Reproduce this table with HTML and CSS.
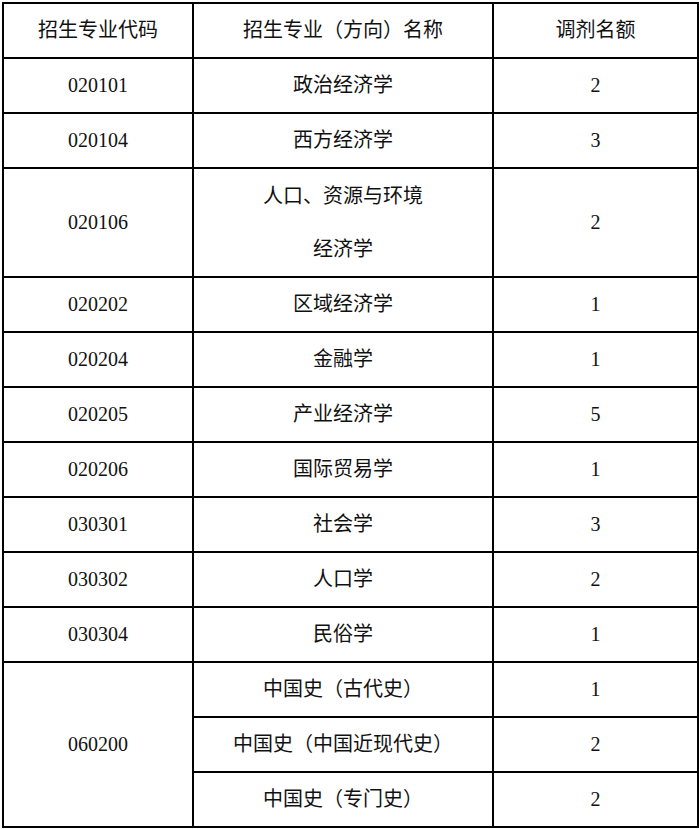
FILE: index.html
```html
<!DOCTYPE html>
<html lang="zh-CN">
<head>
<meta charset="utf-8">
<link rel="stylesheet" href="styles.css">
</head>
<body>
<table class="quota">
  <colgroup>
    <col class="c-code">
    <col class="c-name">
    <col class="c-num">
  </colgroup>
  <thead>
    <tr><th>招生专业代码</th><th>招生专业（方向）名称</th><th>调剂名额</th></tr>
  </thead>
  <tbody>
    <tr><td>020101</td><td>政治经济学</td><td>2</td></tr>
    <tr><td>020104</td><td>西方经济学</td><td>3</td></tr>
    <tr class="tall"><td>020106</td><td>人口、资源与环境<br>经济学</td><td>2</td></tr>
    <tr><td>020202</td><td>区域经济学</td><td>1</td></tr>
    <tr><td>020204</td><td>金融学</td><td>1</td></tr>
    <tr><td>020205</td><td>产业经济学</td><td>5</td></tr>
    <tr><td>020206</td><td>国际贸易学</td><td>1</td></tr>
    <tr><td>030301</td><td>社会学</td><td>3</td></tr>
    <tr><td>030302</td><td>人口学</td><td>2</td></tr>
    <tr><td>030304</td><td>民俗学</td><td>1</td></tr>
    <tr><td rowspan="3">060200</td><td>中国史（古代史）</td><td>1</td></tr>
    <tr><td>中国史（中国近现代史）</td><td>2</td></tr>
    <tr><td>中国史（专门史）</td><td>2</td></tr>
  </tbody>
</table>
</body>
</html>
```
FILE: styles.css
```css
html, body {
  margin: 0;
  padding: 0;
  background: #ffffff;
}
body {
  padding: 2px 0 0 2px;
}
.quota {
  border-collapse: collapse;
  table-layout: fixed;
  width: 695px;
  font-family: "Liberation Serif", "Noto Sans CJK SC", serif;
  font-size: 20px;
  color: #111111;
}
.c-code { width: 190px; }
.c-name { width: 300px; }
.c-num { width: 205px; }
.quota th,
.quota td {
  border: 2px solid #000000;
  padding: 0;
  height: 53px;
  line-height: 53px;
  text-align: center;
  vertical-align: middle;
  font-weight: normal;
}
.quota tr.tall td {
  height: 107px;
  line-height: 53px;
}
```
